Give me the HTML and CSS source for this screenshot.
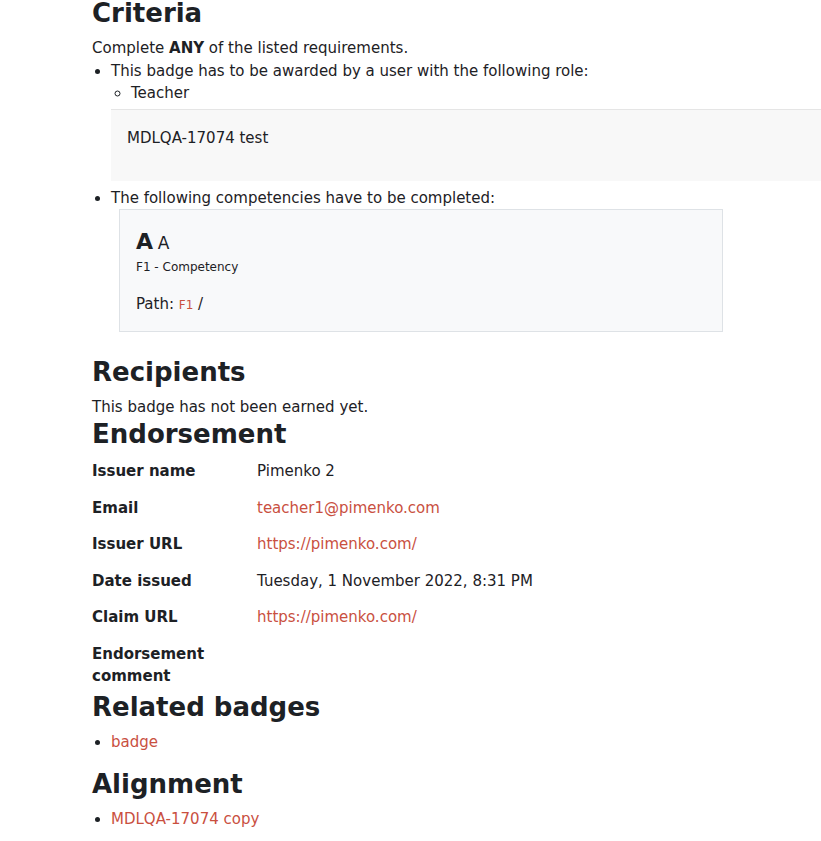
FILE: index.html
```html
<!DOCTYPE html>
<html lang="en">
<head>
  <meta charset="UTF-8">
  <meta name="viewport" content="width=device-width, initial-scale=1.0">
  <title>Badge details</title>
  <link rel="stylesheet" href="styles.css">
</head>
<body>
  <div class="page">

    <h3>Criteria</h3>
    <p class="note">Complete <b>ANY</b> of the listed requirements.</p>
    <ul class="criteria">
      <li>This badge has to be awarded by a user with the following role:
        <ul class="sub">
          <li>Teacher</li>
        </ul>
        <div class="desc">MDLQA-17074 test</div>
      </li>
      <li>The following competencies have to be completed:
        <div class="competency">
          <div class="comp-title"><span class="big">A</span> <span class="small">A</span></div>
          <div class="comp-framework">F1 - Competency</div>
          <div class="comp-path">Path: <a href="#">F1</a> /</div>
        </div>
      </li>
    </ul>

    <h3>Recipients</h3>
    <p class="note">This badge has not been earned yet.</p>

    <h3>Endorsement</h3>
    <dl class="details">
      <dt>Issuer name</dt>
      <dd>Pimenko 2</dd>
      <dt>Email</dt>
      <dd><a href="#">teacher1@pimenko.com</a></dd>
      <dt>Issuer URL</dt>
      <dd><a href="#">https://pimenko.com/</a></dd>
      <dt>Date issued</dt>
      <dd>Tuesday, 1 November 2022, 8:31 PM</dd>
      <dt>Claim URL</dt>
      <dd><a href="#">https://pimenko.com/</a></dd>
      <dt>Endorsement comment</dt>
      <dd></dd>
    </dl>

    <h3>Related badges</h3>
    <ul class="links">
      <li><a href="#">badge</a></li>
    </ul>

    <h3>Alignment</h3>
    <ul class="links">
      <li><a href="#">MDLQA-17074 copy</a></li>
    </ul>

  </div>
</body>
</html>
```

FILE: styles.css
```css
body {
  font-family: 'DejaVu Sans', 'Verdana', sans-serif;
  font-size: 15px;
  line-height: 1.5;
  color: #1d2125;
  background-color: #ffffff;
  margin: 0;
  padding: 0;
  overflow: hidden;
}

.page {
  padding-left: 92px;
  margin-top: -2px;
}

a {
  color: #c9503f;
  text-decoration: none;
}

h3 {
  font-size: 26px;
  font-weight: bold;
  line-height: 1.2;
  margin: 0 0 8px;
}

.note {
  margin: 0;
}

ul {
  margin: 0;
  padding-left: 19px;
}

.criteria li {
  margin: 0;
}

.sub {
  list-style-type: circle;
  padding-left: 20px;
}

.desc {
  background-color: #f8f8f8;
  border-top: 1px solid #e5e5e5;
  margin-top: 4px;
  margin-right: -40px;
  padding: 17px 16px 32px;
  margin-bottom: 6px;
}

.competency {
  background-color: #f8f9fa;
  border: 1px solid #dee2e6;
  width: 570px;
  margin: -1px 0 25px 8px;
  padding: 15px 16px 16px;
}

.comp-title {
  line-height: 1.5;
}

.comp-title .big {
  font-size: 22px;
  font-weight: bold;
}

.comp-title .small {
  font-size: 17px;
}

.comp-framework {
  font-size: 12px;
  margin-bottom: 17px;
}

.comp-path a {
  font-size: 12px;
}

.details {
  display: grid;
  grid-template-columns: 165px 1fr;
  row-gap: 14px;
  margin: 10px 0 4px;
}

.details dt {
  font-weight: bold;
  width: 130px;
}

.details dd {
  margin: 0;
}

.links {
  margin-top: 0;
  margin-bottom: 16px;
}
```
